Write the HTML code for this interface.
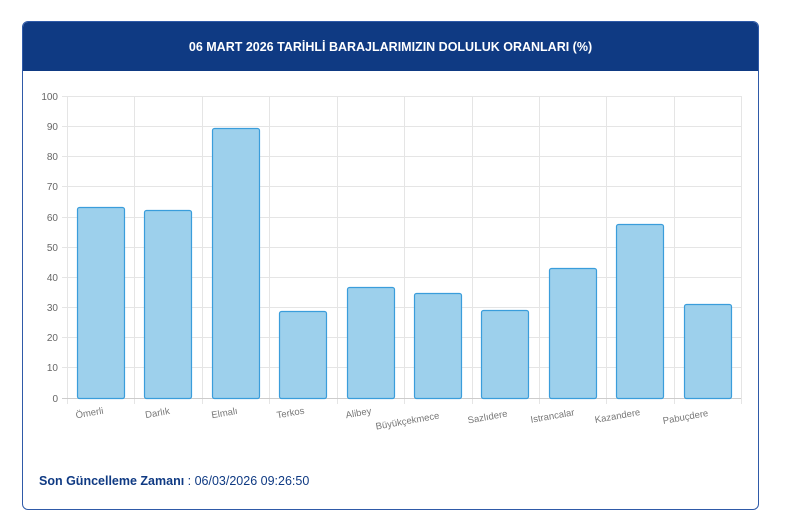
<!DOCTYPE html>
<html><head><meta charset="utf-8"><style>
body{margin:0;background:#fff;font-family:"Liberation Sans",sans-serif;}
.card{position:absolute;left:22px;top:21px;width:735px;height:487px;border:1px solid #2f5aa8;border-radius:6px;overflow:hidden;}
.hdr{height:49px;background:#0f3a83;color:#fff;font-weight:bold;font-size:12.5px;text-align:center;line-height:50px;}
.foot{position:absolute;left:39px;top:474px;font-size:12.5px;color:#0f3a83;}
</style></head><body>
<div class="card"><div class="hdr">06 MART 2026 TARİHLİ BARAJLARIMIZIN DOLULUK ORANLARI (%)</div></div>
<svg style="position:absolute;left:0;top:0" width="800" height="520" font-family="Liberation Sans" font-size="10" fill="#666">
<g stroke="#e5e5e5" stroke-width="1">
<line x1="62" y1="96.5" x2="741" y2="96.5"/><line x1="62" y1="126.5" x2="741" y2="126.5"/><line x1="62" y1="156.5" x2="741" y2="156.5"/><line x1="62" y1="186.5" x2="741" y2="186.5"/><line x1="62" y1="217.5" x2="741" y2="217.5"/><line x1="62" y1="247.5" x2="741" y2="247.5"/><line x1="62" y1="277.5" x2="741" y2="277.5"/><line x1="62" y1="307.5" x2="741" y2="307.5"/><line x1="62" y1="337.5" x2="741" y2="337.5"/><line x1="62" y1="367.5" x2="741" y2="367.5"/>
<line x1="67.5" y1="96" x2="67.5" y2="404"/><line x1="134.5" y1="96" x2="134.5" y2="404"/><line x1="202.5" y1="96" x2="202.5" y2="404"/><line x1="269.5" y1="96" x2="269.5" y2="404"/><line x1="337.5" y1="96" x2="337.5" y2="404"/><line x1="404.5" y1="96" x2="404.5" y2="404"/><line x1="472.5" y1="96" x2="472.5" y2="404"/><line x1="539.5" y1="96" x2="539.5" y2="404"/><line x1="606.5" y1="96" x2="606.5" y2="404"/><line x1="674.5" y1="96" x2="674.5" y2="404"/><line x1="741.5" y1="96" x2="741.5" y2="404"/>
</g>
<line x1="62" y1="398.5" x2="741" y2="398.5" stroke="#ccc"/>
<g text-anchor="end">
<text x="58" y="100">100</text><text x="58" y="130">90</text><text x="58" y="160">80</text><text x="58" y="190">70</text><text x="58" y="221">60</text><text x="58" y="251">50</text><text x="58" y="281">40</text><text x="58" y="311">30</text><text x="58" y="341">20</text><text x="58" y="371">10</text><text x="58" y="402">0</text>
</g>
<g fill="#9dd0ec" stroke="#3a9ddb" stroke-width="1.2">
<rect x="77.5" y="207.5" width="47" height="191" rx="2"/>
<rect x="144.5" y="210.5" width="47" height="188" rx="2"/>
<rect x="212.5" y="128.5" width="47" height="270" rx="2"/>
<rect x="279.5" y="311.5" width="47" height="87" rx="2"/>
<rect x="347.5" y="287.5" width="47" height="111" rx="2"/>
<rect x="414.5" y="293.5" width="47" height="105" rx="2"/>
<rect x="481.5" y="310.5" width="47" height="88" rx="2"/>
<rect x="549.5" y="268.5" width="47" height="130" rx="2"/>
<rect x="616.5" y="224.5" width="47" height="174" rx="2"/>
<rect x="684.5" y="304.5" width="47" height="94" rx="2"/>
</g>
<g font-size="9.5" fill="#777" text-anchor="middle">
<text transform="translate(90,416) rotate(-10)">Ömerli</text>
<text transform="translate(158,416) rotate(-10)">Darlık</text>
<text transform="translate(225,416) rotate(-10)">Elmalı</text>
<text transform="translate(291,416) rotate(-10)">Terkos</text>
<text transform="translate(359,416) rotate(-10)">Alibey</text>
<text transform="translate(408,424) rotate(-10)">Büyükçekmece</text>
<text transform="translate(488,420) rotate(-10)">Sazlıdere</text>
<text transform="translate(553,419) rotate(-10)">Istrancalar</text>
<text transform="translate(618,419) rotate(-10)">Kazandere</text>
<text transform="translate(686,420) rotate(-10)">Pabuçdere</text>
</g>
</svg>
<div class="foot"><b>Son Güncelleme Zamanı</b> : 06/03/2026 09:26:50</div>
</body></html>
